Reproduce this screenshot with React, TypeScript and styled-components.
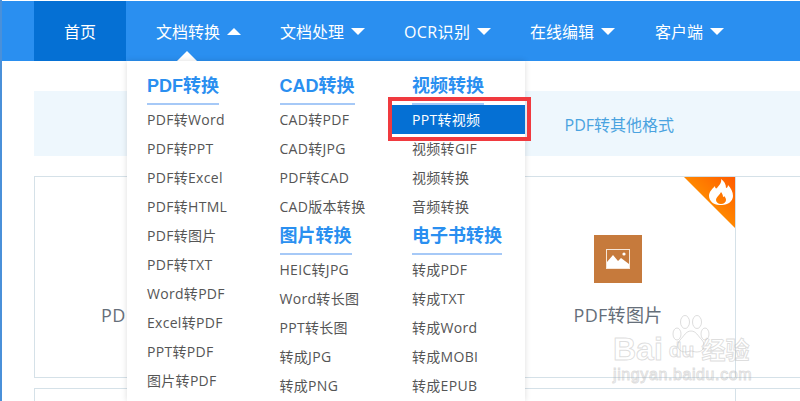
import React from "react";
import styled, { createGlobalStyle } from "styled-components";

const GlobalStyle = createGlobalStyle`
  html, body {
    margin: 0;
    padding: 0;
    height: 100%;
    overflow: hidden;
    background: #fff;
  }
  body {
    font-family: "Open Sans", "Noto Sans CJK SC", sans-serif;
  }
`;

const Page = styled.div`
  position: relative;
  width: 800px;
  height: 401px;
  padding-top: 1px;
  box-sizing: border-box;
  overflow: hidden;
  border-left: 2px solid #4a90d9;
`;

const NavBar = styled.nav`
  display: flex;
  height: 60px;
  padding-left: 32px;
  background: #2a8ff0;
`;

const NavItem = styled.div<{ $active?: boolean; $width: number; $tracking?: number }>`
  position: relative;
  display: flex;
  align-items: center;
  justify-content: ${(p) => (p.$active ? "center" : "flex-start")};
  gap: 7px;
  box-sizing: border-box;
  width: ${(p) => p.$width}px;
  padding-left: ${(p) => (p.$active ? 0 : 30)}px;
  background: ${(p) => (p.$active ? "#0570d4" : "transparent")};
  color: #fff;
  font-size: 16px;
  letter-spacing: ${(p) => p.$tracking ?? 0}px;
  white-space: nowrap;
`;

const Caret = styled.span<{ $up?: boolean }>`
  width: 0;
  height: 0;
  border-left: 7.5px solid transparent;
  border-right: 7.5px solid transparent;
  ${(p) =>
    p.$up ? "border-bottom: 7px solid #fff;" : "border-top: 7px solid #fff;"}
`;

const Pointer = styled.span`
  position: absolute;
  left: 50%;
  bottom: 0;
  margin-left: -11px;
  width: 0;
  height: 0;
  border-left: 10px solid transparent;
  border-right: 10px solid transparent;
  border-bottom: 10px solid #fff;
`;

const Content = styled.main`
  padding: 30px 0 0 32px;
`;

const TabBand = styled.div`
  display: flex;
  align-items: center;
  justify-content: flex-end;
  height: 65px;
  padding-right: 126px;
  background: #eef7fd;
  color: #4aa3e0;
  font-size: 16px;
`;

const CardGrid = styled.div`
  display: grid;
  grid-template-columns: 702px 300px;
  grid-auto-rows: 202px;
  row-gap: 10px;
  margin-top: 20px;
`;

const Card = styled.div<{ $side?: boolean }>`
  position: relative;
  display: flex;
  flex-direction: column;
  align-items: center;
  box-sizing: border-box;
  border: 1px solid #d5e1e8;
  ${(p) => p.$side && "border-left: none;"}
`;

const FeaturedCard = styled(Card)`
  padding: 58px 0 0 466px;
`;

const CardIcon = styled.div`
  display: flex;
  align-items: center;
  justify-content: center;
  width: 48px;
  height: 48px;
  background: #c67a3c;
`;

const CardTitle = styled.div`
  margin-top: 18px;
  color: #666f7a;
  font-size: 18px;
  line-height: 28px;
  letter-spacing: 0.3px;
  white-space: nowrap;
`;

const CutTitle = styled(CardTitle)`
  position: absolute;
  left: 66px;
  top: 124px;
  margin: 0;
`;

const HotBadge = styled.div`
  position: absolute;
  top: 0;
  right: 0;
  width: 51px;
  height: 51px;
  background: linear-gradient(45deg, #ffb400, #ff5a00);
  clip-path: polygon(0 0, 100% 0, 100% 100%);
  line-height: 0;

  svg {
    position: absolute;
    top: 2px;
    right: 2px;
  }
`;

const Dropdown = styled.div`
  position: absolute;
  left: 125px;
  top: 61px;
  width: 398px;
  height: 340px;
  display: grid;
  grid-template-columns: 132.5px 132.5px 1fr;
  box-sizing: border-box;
  padding: 12px 0 0 20px;
  background: #fff;
  box-shadow: 0 0 6px rgba(0, 0, 0, 0.14);
`;

const Column = styled.div`
  display: flex;
  flex-direction: column;
  align-items: flex-start;
`;

const Option = styled.div`
  height: 29px;
  line-height: 29px;
  color: #555;
  font-size: 14px;
  letter-spacing: 0.3px;
  white-space: nowrap;
`;

const GroupTitle = styled.div`
  height: 30px;
  line-height: 26px;
  border-bottom: 2px solid #a6c9f7;
  color: #2a8ff0;
  font-family: "Liberation Sans", "Noto Sans CJK SC", sans-serif;
  font-size: 18px;
  font-weight: 700;
  white-space: nowrap;

  ${Option} + & {
    margin-top: 2px;
  }
`;

const SelectedOption = styled(Option)`
  position: relative;
  align-self: stretch;
  margin-left: -20px;
  padding-left: 20px;
  background: #0570d4;
  color: #fff;

  &::after {
    content: "";
    position: absolute;
    left: -4px;
    right: -6px;
    top: -8px;
    bottom: -7px;
    border: 4px solid #f03a3f;
    pointer-events: none;
  }
`;

const Watermark = styled.div`
  position: absolute;
  left: 611px;
  top: 334px;
  width: 146px;
  color: transparent;
  -webkit-text-stroke: 1px rgba(175, 175, 175, 0.42);
  font-family: "Liberation Sans", sans-serif;
  line-height: 1;
  pointer-events: none;
`;

const WatermarkPaw = styled.svg`
  position: absolute;
  left: 58px;
  top: -20px;
`;

const WatermarkLogo = styled.div`
  display: flex;
  align-items: center;
  height: 30px;
  font-weight: 700;
  white-space: nowrap;
`;

const WatermarkBai = styled.span`
  font-size: 32px;
`;

const WatermarkDu = styled.span`
  margin-left: 6px;
  font-size: 21px;
`;

const WatermarkCn = styled.span`
  margin-left: 7px;
  font-family: "Noto Sans CJK SC", sans-serif;
  font-size: 24px;
`;

const WatermarkUrl = styled.div`
  margin-top: 3px;
  font-size: 16px;
  letter-spacing: 0.6px;
  white-space: nowrap;
`;

const nav = [
  { label: "首页", width: 92, active: true },
  { label: "文档转换", width: 124, caret: "up" },
  { label: "文档处理", width: 124, caret: "down" },
  { label: "OCR识别", width: 126, caret: "down", tracking: 0.4 },
  { label: "在线编辑", width: 125, caret: "down" },
  { label: "客户端", width: 120, caret: "down" },
];

const columns = [
  [
    { title: "PDF转换", items: ["PDF转Word", "PDF转PPT", "PDF转Excel", "PDF转HTML", "PDF转图片", "PDF转TXT", "Word转PDF", "Excel转PDF", "PPT转PDF", "图片转PDF"] },
  ],
  [
    { title: "CAD转换", items: ["CAD转PDF", "CAD转JPG", "PDF转CAD", "CAD版本转换"] },
    { title: "图片转换", items: ["HEIC转JPG", "Word转长图", "PPT转长图", "转成JPG", "转成PNG"] },
  ],
  [
    { title: "视频转换", items: ["PPT转视频", "视频转GIF", "视频转换", "音频转换"] },
    { title: "电子书转换", items: ["转成PDF", "转成TXT", "转成Word", "转成MOBI", "转成EPUB"] },
  ],
];

const App = () => (
  <Page>
    <GlobalStyle />
    <NavBar>
      {nav.map((item) => (
        <NavItem
          key={item.label}
          $active={item.active}
          $width={item.width}
          $tracking={item.tracking}
        >
          {item.label}
          {item.caret && <Caret $up={item.caret === "up"} />}
          {item.caret === "up" && <Pointer />}
        </NavItem>
      ))}
    </NavBar>
    <Content>
      <TabBand>PDF转其他格式</TabBand>
      <CardGrid>
        <FeaturedCard>
          <CutTitle>PD</CutTitle>
          <HotBadge>
            <svg width="24" height="26" viewBox="0 0 24 26">
              <path
                fillRule="evenodd"
                fill="#fff"
                d="M12 0c1 4-2 6-4 9-1 1-2 0-2-2C3 10 0 13 0 17c0 5 5 9 10 9h3c6 0 11-4 11-9 0-4-2-8-5-11 0 2-1 3-2 3 0-4-2-7-5-9zM12 13c-1 3-5 5-5 8 0 2 2 4 5 4s5-2 5-4c0-2-1-3-2-4 0 1-1 1-1 1 0-2-1-4-2-5z"
              />
            </svg>
          </HotBadge>
          <CardIcon>
            <svg width="24" height="20" viewBox="0 0 24 20">
              <rect x="0.5" y="0.5" width="23" height="19" fill="none" stroke="#f6e6d8" />
              <circle cx="18" cy="5" r="1.6" fill="#fff" />
              <polygon points="1,19 1,13 7,6 12,12 15,9 23,15 23,19" fill="#fff" />
            </svg>
          </CardIcon>
          <CardTitle>PDF转图片</CardTitle>
        </FeaturedCard>
        <Card $side />
        <Card />
        <Card $side />
      </CardGrid>
    </Content>
    <Dropdown>
      {columns.map((groups, i) => (
        <Column key={i}>
          {groups.map((group) => (
            <React.Fragment key={group.title}>
              <GroupTitle>{group.title}</GroupTitle>
              {group.items.map((label) =>
                label === "PPT转视频" ? (
                  <SelectedOption key={label}>{label}</SelectedOption>
                ) : (
                  <Option key={label}>{label}</Option>
                )
              )}
            </React.Fragment>
          ))}
        </Column>
      ))}
    </Dropdown>
    <Watermark>
      <WatermarkPaw width="40" height="40" viewBox="0 0 40 40">
        <g fill="none" stroke="rgba(175,175,175,0.42)">
          <ellipse cx="6" cy="20" rx="4" ry="6" />
          <ellipse cx="14" cy="8" rx="4.5" ry="6.5" />
          <ellipse cx="26" cy="8" rx="4.5" ry="6.5" />
          <ellipse cx="34" cy="20" rx="4" ry="6" />
          <path d="M20 17c-5 0-7 5-11 9-4 5-2 12 5 12 3 0 4-1 6-1s3 1 6 1c7 0 9-7 5-12-4-4-6-9-11-9z" />
        </g>
      </WatermarkPaw>
      <WatermarkLogo>
        <WatermarkBai>Bai</WatermarkBai>
        <WatermarkDu>du</WatermarkDu>
        <WatermarkCn>经验</WatermarkCn>
      </WatermarkLogo>
      <WatermarkUrl>jingyan.baidu.com</WatermarkUrl>
    </Watermark>
  </Page>
);

export default App;
